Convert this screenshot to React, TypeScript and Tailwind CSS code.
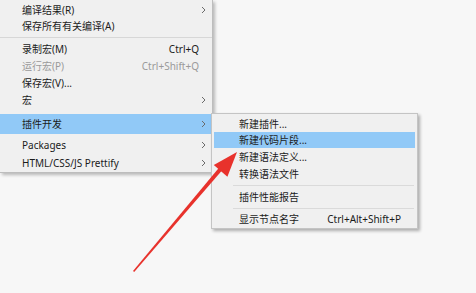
import React from "react";

const font = { fontFamily: '"Noto Sans", "Noto Sans CJK SC", sans-serif' };

function Chevron({ color = "#6b6b6b" }: { color?: string }) {
  return (
    <svg width="5" height="8" viewBox="0 0 5 8" className="shrink-0">
      <path d="M1 1 L4 4 L1 7" fill="none" stroke={color} strokeWidth="1" />
    </svg>
  );
}

function MainRow({
  label,
  h,
  shortcut,
  sub,
  disabled,
  active,
}: {
  label: string;
  h: string;
  shortcut?: string;
  sub?: boolean;
  disabled?: boolean;
  active?: boolean;
}) {
  return (
    <div
      className={`flex items-center pl-[22px] pr-[6px] ${h} ${active ? "bg-[#91c9f7]" : ""} ${
        disabled ? "text-[#9a9a9a]" : "text-[#1b1b1b]"
      }`}
    >
      <span className="flex-1 whitespace-nowrap">{label}</span>
      {shortcut && <span className="mr-[7px] whitespace-nowrap">{shortcut}</span>}
      {sub && <Chevron />}
    </div>
  );
}

function SubRow({
  label,
  h,
  shortcut,
  active,
}: {
  label: string;
  h: string;
  shortcut?: string;
  active?: boolean;
}) {
  return (
    <div
      className={`flex items-center ml-[2px] mr-[2px] pl-[25px] pr-[14px] text-[#1b1b1b] ${h} ${
        active ? "bg-[#91c9f7]" : ""
      }`}
    >
      <span className="flex-1 whitespace-nowrap">{label}</span>
      {shortcut && <span className="whitespace-nowrap">{shortcut}</span>}
    </div>
  );
}

export default function App() {
  return (
    <div
      className="relative w-[476px] h-[293px] overflow-hidden bg-[#f7f7f7] text-[10px] leading-none"
      style={font}
    >
      {/* main menu */}
      <div className="w-[213px] bg-[#f0f0f0] border-r border-b border-[#bdbdbd] pt-[2px] pb-[1px] shadow-[2px_2px_3px_rgba(0,0,0,0.25)]">
        <MainRow label="编译结果(R)" h="h-[16px]" sub />
        <MainRow label="保存所有有关编译(A)" h="h-[16px]" />
        <div className="h-[6px] flex items-center">
          <div className="w-full h-px bg-[#d7d7d7]" />
        </div>
        <MainRow label="录制宏(M)" h="h-[17px]" shortcut="Ctrl+Q" />
        <MainRow label="运行宏(P)" h="h-[17px]" shortcut="Ctrl+Shift+Q" disabled />
        <MainRow label="保存宏(V)..." h="h-[17px]" />
        <MainRow label="宏" h="h-[17px]" sub />
        <div className="h-[6px]" />
        <MainRow label="插件开发" h="h-[20px]" sub active />
        <div className="h-[2px]" />
        <MainRow label="Packages" h="h-[18px]" sub />
        <MainRow label="HTML/CSS/JS Prettify" h="h-[17px]" sub />
      </div>

      {/* submenu */}
      <div className="absolute left-[211px] top-[113px] w-[207px] h-[116px] bg-[#f0f0f0] border border-[#c4c4c4] pt-[1px] shadow-[2px_2px_3px_rgba(0,0,0,0.3)]">
        <SubRow label="新建插件..." h="h-[17px]" />
        <SubRow label="新建代码片段..." h="h-[16px]" active />
        <SubRow label="新建语法定义..." h="h-[18px]" />
        <SubRow label="转换语法文件" h="h-[16px]" />
        <div className="h-[6px] flex items-center pl-[21px] pr-[3px]">
          <div className="w-full h-px bg-[#dadada]" />
        </div>
        <SubRow label="插件性能报告" h="h-[18px]" />
        <div className="h-[4px] flex items-center pl-[21px] pr-[3px]">
          <div className="w-full h-px bg-[#dadada]" />
        </div>
        <SubRow label="显示节点名字" h="h-[17px]" shortcut="Ctrl+Alt+Shift+P" />
      </div>

      {/* red arrow annotation */}
      <svg
        className="absolute left-0 top-0 pointer-events-none"
        width="476"
        height="293"
        viewBox="0 0 476 293"
      >
        <polygon
          points="133,271 134.2,272 222.6,169.8 219.4,167.2"
          fill="#e8322c"
        />
        <polygon points="237,152 213.8,165 227.4,176.8" fill="#e8322c" />
      </svg>
    </div>
  );
}
